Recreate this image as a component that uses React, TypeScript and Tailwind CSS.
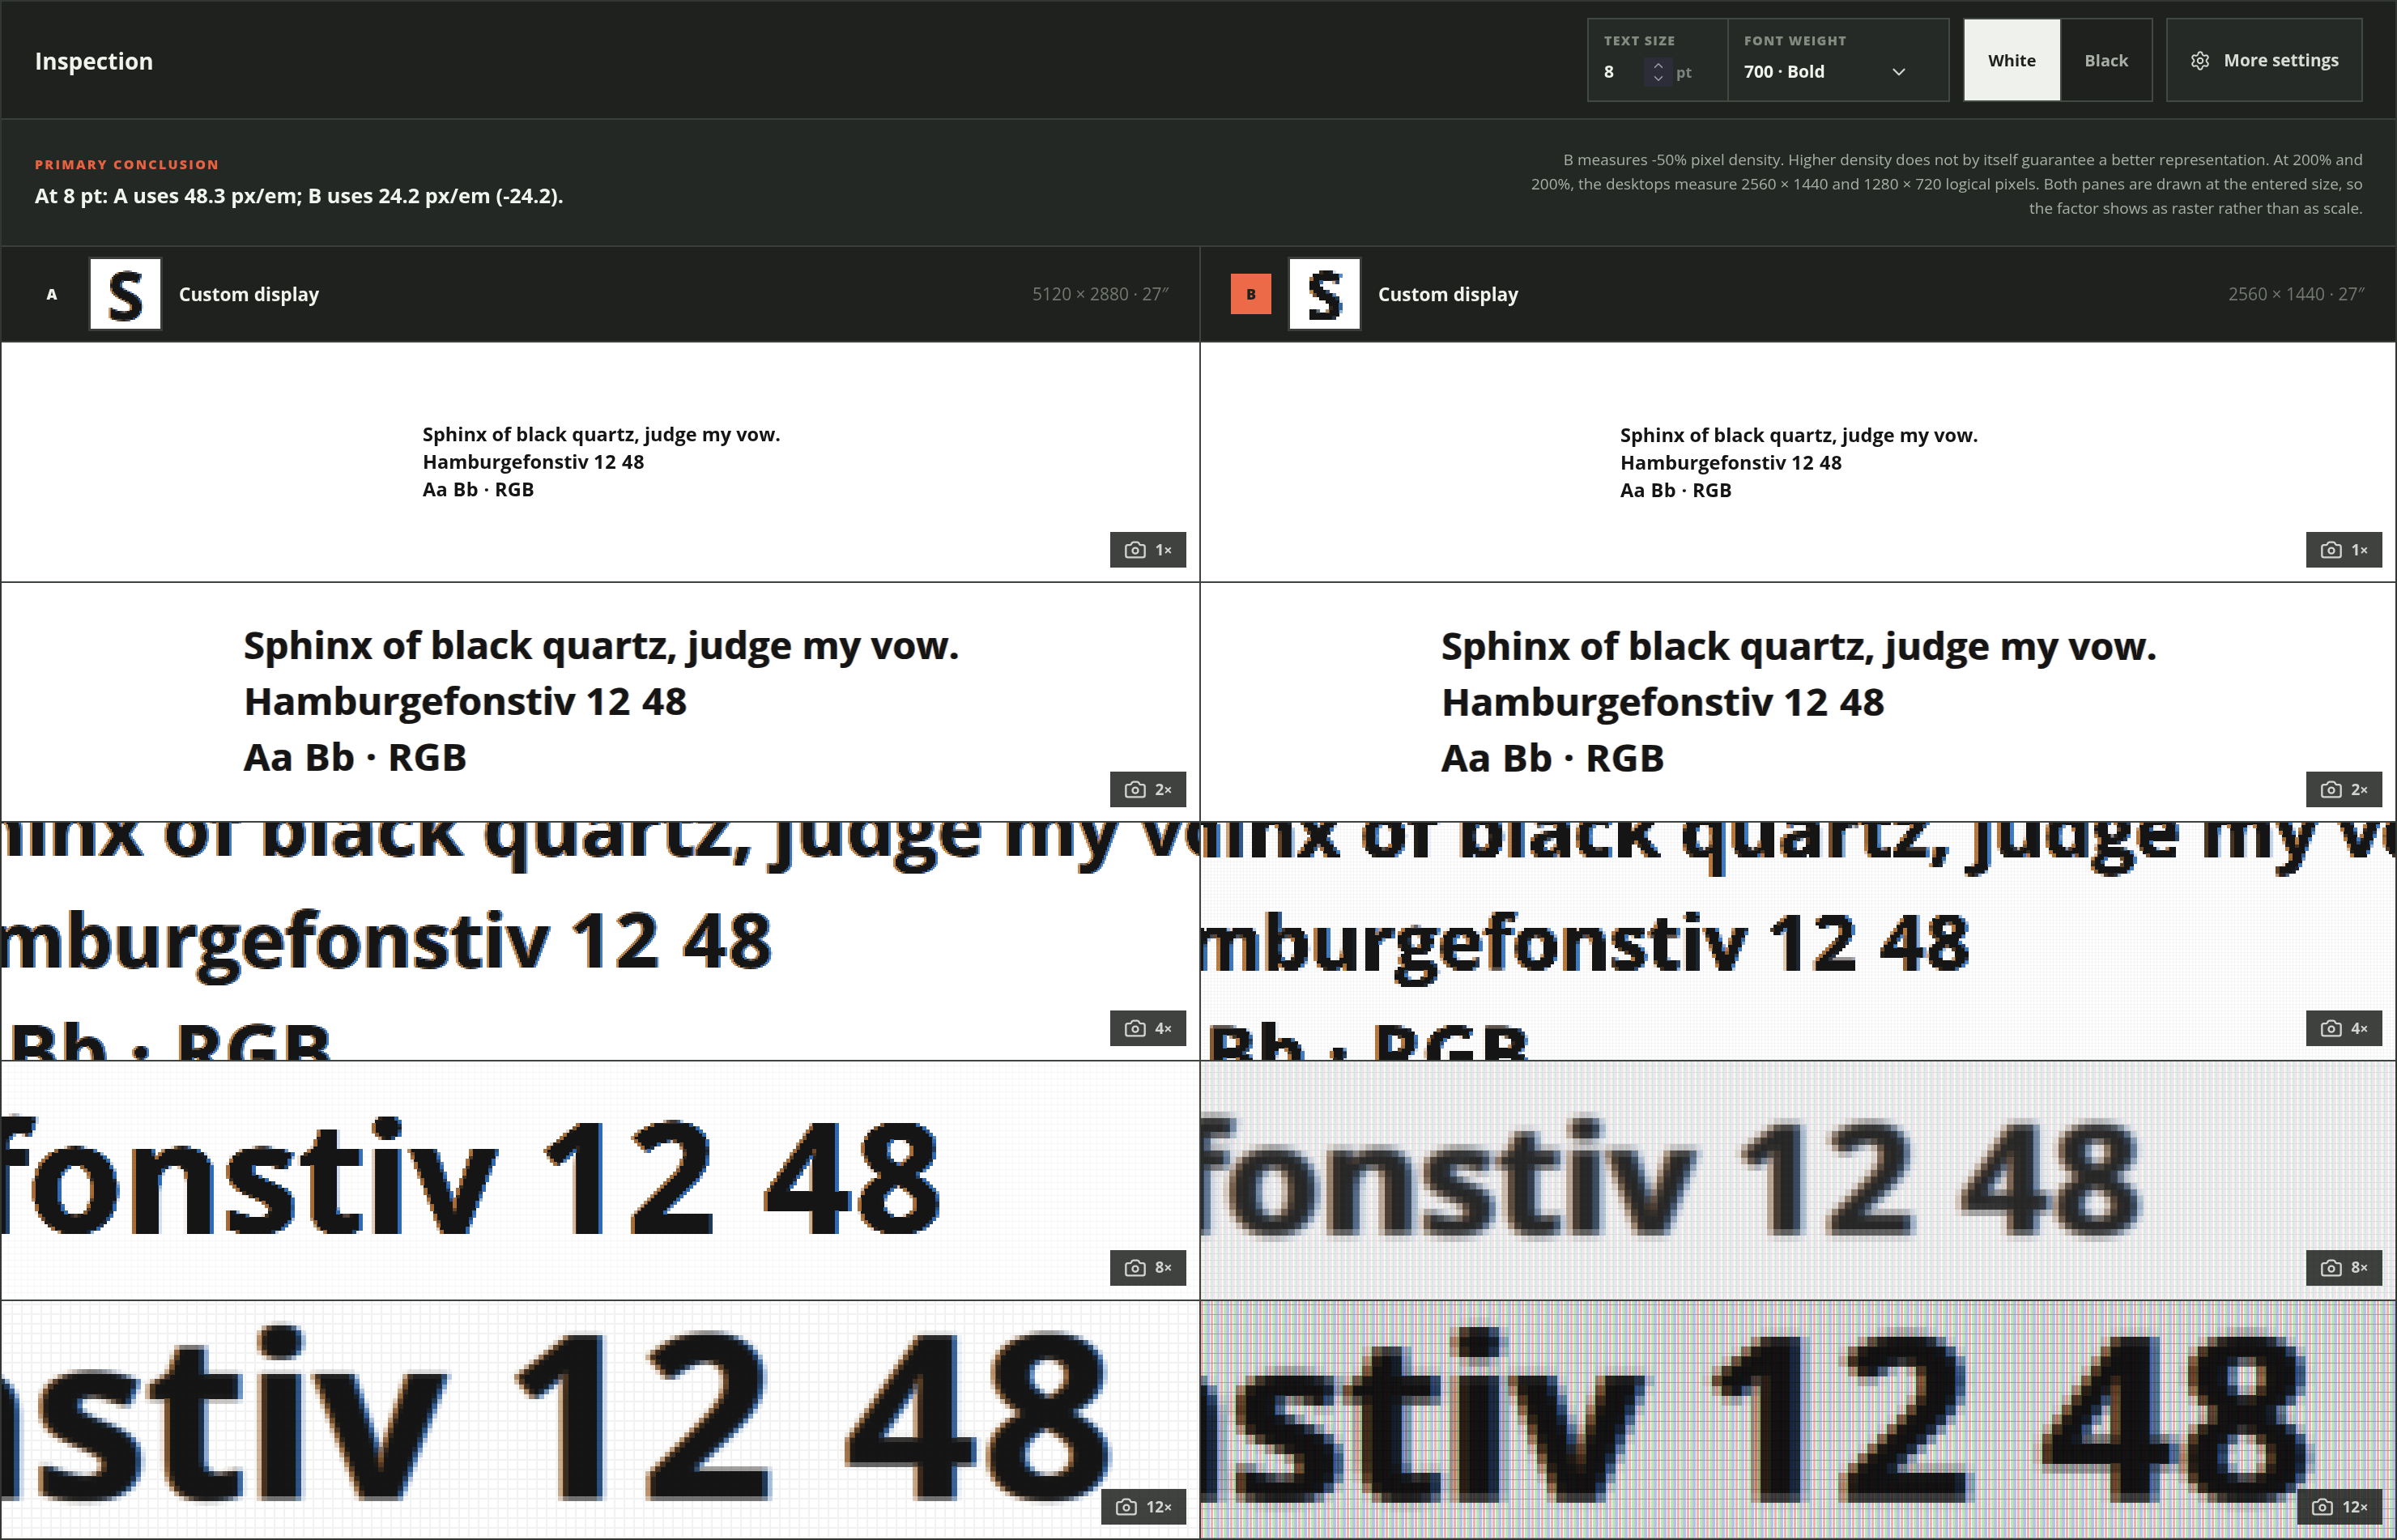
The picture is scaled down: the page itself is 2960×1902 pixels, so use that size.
import { Camera, ChevronDown, ChevronUp, Settings } from "lucide-react";

const FONT = "font-['Open_Sans','Noto_Sans',sans-serif]";

type Row = {
  label: string;
  text: string;
  shift: string;
  fx: string;
  grid: string;
  tag: string;
};

const ROWS_A: Row[] = [
  { label: "1", text: "text-[23.5px] leading-[34px]", shift: "pb-[2px] pl-[3px]", fx: "", grid: "", tag: "w-[94px]" },
  {
    label: "2",
    text: "text-[47px] leading-[69px]",
    shift: "pb-[4px] pl-[3px]",
    fx: "[text-shadow:-1px_0_#d9a066,1px_0_#6a9ad8]",
    grid: "",
    tag: "w-[94px]",
  },
  {
    label: "4",
    text: "text-[94px] leading-[138px]",
    shift: "pb-[8px] pl-[3px]",
    fx: "[text-shadow:-2px_0_#c98a4a,2px_0_#3f7cc4] [filter:url(#px2)]",
    grid: "",
    tag: "w-[94px]",
  },
  {
    label: "8",
    text: "text-[188px] leading-[276px]",
    shift: "pb-[18px] pl-[3px]",
    fx: "[text-shadow:-3px_0_#a86c34,3px_0_#2f6cb8] [filter:url(#px4)]",
    grid: "[background-image:repeating-linear-gradient(0deg,#f7f7f7_0_1px,transparent_1px_8px),repeating-linear-gradient(90deg,#f7f7f7_0_1px,transparent_1px_8px)]",
    tag: "w-[94px]",
  },
  {
    label: "12",
    text: "text-[282px] leading-[414px]",
    shift: "pb-[22px] pl-[3px]",
    fx: "[text-shadow:-5px_0_#a86c34,5px_0_#2f6cb8] [filter:url(#px6)]",
    grid: "[background-image:repeating-linear-gradient(0deg,#f2f2f2_0_2px,transparent_2px_12px),repeating-linear-gradient(90deg,#f2f2f2_0_2px,transparent_2px_12px)]",
    tag: "w-[105px]",
  },
];

const ROWS_B: Row[] = [
  { label: "1", text: "text-[23.5px] leading-[34px]", shift: "pl-[3px]", fx: "", grid: "", tag: "w-[94px]" },
  {
    label: "2",
    text: "text-[47px] leading-[69px]",
    shift: "pb-[2px] pl-[3px]",
    fx: "[text-shadow:-1px_0_#d9a066,1px_0_#6a9ad8]",
    grid: "",
    tag: "w-[94px]",
  },
  {
    label: "4",
    text: "text-[94px] leading-[138px]",
    shift: "pb-[4px] pl-[3px]",
    fx: "[text-shadow:-2px_0_#b87a3c,2px_0_#3f7cc4] [filter:url(#px4)]",
    grid: "[background-image:repeating-linear-gradient(0deg,#f5f5f5_0_1px,transparent_1px_4px),repeating-linear-gradient(90deg,#f5f5f5_0_1px,transparent_1px_4px)]",
    tag: "w-[94px]",
  },
  {
    label: "8",
    text: "text-[188px] leading-[276px]",
    shift: "pb-[14px] pl-[3px]",
    fx: "[text-shadow:-5px_0_#a86c34,5px_0_#2f6cb8] [filter:url(#px8)] opacity-90",
    grid: "[background-image:repeating-linear-gradient(0deg,#dcdcdc_0_1px,transparent_1px_8px),repeating-linear-gradient(90deg,#f6e6e6_0_2px,#ffffff_2px_3px,#e6f4e8_3px_5px,#dddddd_5px_6px,#e6e8f8_6px_8px)]",
    tag: "w-[94px]",
  },
  {
    label: "12",
    text: "text-[282px] leading-[414px]",
    shift: "pb-[18px] pl-[3px]",
    fx: "[text-shadow:-8px_0_#a86c34,8px_0_#2f6cb8] [filter:url(#px12)]",
    grid: "[background-image:repeating-linear-gradient(0deg,#a0a0a0_0_1px,transparent_1px_12px),repeating-linear-gradient(90deg,#f4b0b0_0_3px,#ffffff_3px_4px,#b4eab8_4px_7px,#c4ccc4_7px_8px,#b8c0f0_8px_11px,#ffffff_11px_12px)]",
    tag: "w-[105px]",
  },
];

// mosaic filters: sample one dot per cell and grow it back, so the text reads as scaled-up raster
function PixelFilter({ id, cell, soft }: { id: string; cell: number; soft: number }) {
  const half = cell / 2;
  return (
    <filter id={id} x="0" y="0" width="100%" height="100%" colorInterpolationFilters="sRGB">
      <feGaussianBlur in="SourceGraphic" stdDeviation={soft} result="src" />
      <feFlood x={half} y={half} width="1" height="1" floodColor="#000" />
      <feComposite width={cell} height={cell} />
      <feTile result="dots" />
      <feComposite in="src" in2="dots" operator="in" />
      <feMorphology operator="dilate" radius={half} />
    </filter>
  );
}

function ZoomRow({ row }: { row: Row }) {
  return (
    <div className={`relative flex min-h-0 items-center justify-center overflow-hidden border-t-2 border-[#3f433f] bg-white first:border-t-0 ${row.shift}`}>
      <div className={`shrink-0 whitespace-nowrap font-bold text-[#151515] ${row.text} ${row.fx}`}>
        <div>Sphinx of black quartz, judge my vow.</div>
        <div>
          Hamburgefonstiv <span className="tracking-[0.03em]">12 48</span>
        </div>
        <div className="tracking-[0.015em]">Aa Bb · RGB</div>
      </div>
      {row.grid && <div className={`pointer-events-none absolute inset-0 mix-blend-multiply ${row.grid}`} />}
      <div className={`absolute right-[16px] bottom-[17px] flex h-[44px] items-center justify-center gap-[10px] bg-[#1f211f]/85 text-[#d2d4d0] ${row.tag}`}>
        <Camera size={28} strokeWidth={2} />
        <span className="text-[19px] font-bold">
          {row.label}
          <span className="text-[18px]">×</span>
        </span>
      </div>
    </div>
  );
}

function Pane({ badge, res, rows, divider }: { badge: string; res: string; rows: Row[]; divider?: boolean }) {
  return (
    <div className={`flex min-h-0 min-w-0 flex-col ${divider ? "border-r-2 border-[#3f433f]" : ""}`}>
      <div className="flex h-[118px] shrink-0 items-center border-b-2 border-[#3a3f3a] bg-[#1f211f] pr-[38px] pl-[37px]">
        <div
          className={`flex h-[50px] w-[50px] items-center justify-center text-[18px] font-extrabold ${
            badge === "B" ? "bg-[#ec6a48] text-[#1f211f]" : "text-[#f0f2ec]"
          }`}
        >
          {badge}
        </div>
        <div className="ml-[20px] flex h-[92px] w-[92px] items-center justify-center overflow-hidden border-[3px] border-[#3a3d3a] bg-white">
          <span
            className={`text-[82px] leading-none font-bold text-[#151515] [text-shadow:-1px_0_#c98a4a,1px_0_#3f7cc4] ${
              badge === "B" ? "[filter:url(#px4)]" : "[filter:url(#px2)]"
            }`}
          >
            S
          </span>
        </div>
        <span className="ml-[20px] pt-[2px] text-[22.7px] font-bold text-[#f0f2ec]">Custom display</span>
        <span className="ml-auto pt-[2px] text-[21px] text-[#727770]">{res}</span>
      </div>
      <div className="grid min-h-0 flex-1 grid-rows-5">
        {rows.map((row) => (
          <ZoomRow key={row.label} row={row} />
        ))}
      </div>
    </div>
  );
}

export default function App() {
  return (
    <div className={`flex h-[1902px] w-[2960px] flex-col overflow-hidden border-2 border-[#333733] bg-[#1f211f] ${FONT}`}>
      <svg className="absolute h-0 w-0" aria-hidden="true">
        <PixelFilter id="px2" cell={2} soft={0.5} />
        <PixelFilter id="px4" cell={4} soft={0.7} />
        <PixelFilter id="px6" cell={6} soft={2} />
        <PixelFilter id="px8" cell={8} soft={4} />
        <PixelFilter id="px12" cell={12} soft={4} />
      </svg>

      {/* Header */}
      <div className="flex h-[146px] shrink-0 items-center justify-between border-b-2 border-[#3a3f3a] pr-[40px] pl-[41px]">
        <h1 className="pt-[2px] text-[28px] font-bold text-[#f0f2ec]">Inspection</h1>
        <div className="flex h-[104px] items-stretch gap-[16px]">
          <div className="flex w-[448px] border-2 border-[#424842] bg-[#262a26]">
            <div className="w-[173px] border-r-2 border-[#424842] pt-[14px] pl-[19px]">
              <div className="text-[16px] leading-[24px] font-extrabold tracking-[0.08em] text-[#838a80]">TEXT SIZE</div>
              <div className="mt-[9px] flex h-[36px] items-center">
                <span className="w-[49px] text-[21px] font-bold text-[#f0f2ec]">8</span>
                <div className="flex h-[36px] w-[36px] flex-col items-center justify-center bg-[#2d2d3a] text-[#a0a0ab]">
                  <ChevronUp size={18} strokeWidth={2} className="-mb-[1px]" />
                  <ChevronDown size={18} strokeWidth={2} className="-mt-[1px]" />
                </div>
                <span className="ml-[4px] text-[18px] font-bold text-[#7d8480]">pt</span>
              </div>
            </div>
            <div className="flex-1 pt-[14px] pl-[19px]">
              <div className="text-[16px] leading-[24px] font-extrabold tracking-[0.08em] text-[#838a80]">FONT WEIGHT</div>
              <div className="mt-[9px] flex h-[36px] items-center justify-between pr-[48px]">
                <span className="text-[21px] font-bold text-[#f0f2ec]">700 · Bold</span>
                <ChevronDown size={26} strokeWidth={2} className="text-[#d2d4d0]" />
              </div>
            </div>
          </div>
          <div className="flex w-[235px] border-2 border-[#424842]">
            <div className="flex w-[118px] items-center justify-center bg-[#eff2ec] pt-[2px] text-[20px] font-bold text-[#1f211f]">
              White
            </div>
            <div className="flex flex-1 items-center justify-center border-l-2 border-[#424842] pt-[2px] text-[20px] font-bold text-[#a9aea6]">
              Black
            </div>
          </div>
          <div className="flex w-[243px] items-center justify-center gap-[16px] border-2 border-[#424842] bg-[#262a26] pt-[2px] text-[20.8px] font-bold text-[#d9dcd5]">
            <Settings size={26} strokeWidth={1.75} />
            More settings
          </div>
        </div>
      </div>

      {/* Conclusion */}
      <div className="flex h-[157px] shrink-0 items-center justify-between border-b-2 border-[#3a3f3a] bg-[#232824] pr-[40px] pl-[41px]">
        <div>
          <div className="-mt-[2px] text-[16px] leading-[24px] font-extrabold tracking-[0.14em] text-[#e8623f]">
            PRIMARY CONCLUSION
          </div>
          <div className="mt-[9px] text-[25.4px] leading-[34px] font-bold text-[#f1f3ee]">
            At 8 pt: A uses 48.3 px/em; B uses 24.2 px/em (-24.2).
          </div>
        </div>
        <p className="pt-[2px] text-right text-[18.95px] leading-[30px] whitespace-nowrap text-[#a8afa5]">
          B measures -50% pixel density. Higher density does not by itself guarantee a better representation. At 200%
          and
          <br />
          200%, the desktops measure 2560 × 1440 and 1280 × 720 logical pixels. Both panes are drawn at the entered
          size, so
          <br />
          the factor shows as raster rather than as scale.
        </p>
      </div>

      {/* Panes */}
      <div className="grid min-h-0 flex-1 grid-cols-[1481px_1fr] grid-rows-[minmax(0,1fr)]">
        <Pane badge="A" res="5120 × 2880 · 27″" rows={ROWS_A} divider />
        <Pane badge="B" res="2560 × 1440 · 27″" rows={ROWS_B} />
      </div>
    </div>
  );
}
